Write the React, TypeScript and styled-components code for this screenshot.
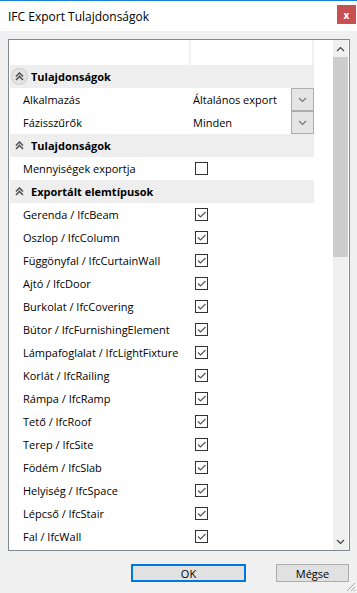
import styled, { createGlobalStyle } from 'styled-components';

const GlobalStyle = createGlobalStyle`
  html, body {
    margin: 0;
    padding: 0;
    background: #f0f0f0;
  }
  body {
    font-family: 'Open Sans', 'Noto Sans', sans-serif;
    font-size: 11px;
    color: #000;
  }
`;

const Window = styled.div`
  width: 357px;
  height: 593px;
  box-sizing: border-box;
  border-top: 1px solid #1883d7;
  background: #f0f0f0;
  display: flex;
  flex-direction: column;
  position: relative;
  overflow: hidden;
`;

const TitleBar = styled.div`
  height: 30px;
  background: #fff;
  display: flex;
  align-items: center;
  justify-content: space-between;
  padding-left: 8px;
  font-size: 12px;
`;

const CloseButton = styled.div`
  width: 19px;
  height: 19px;
  margin-right: 1px;
  margin-top: -3px;
  background: #c75050;
  color: #fff;
  font-weight: bold;
  font-size: 10px;
  display: flex;
  align-items: center;
  justify-content: center;
`;

const Body = styled.div`
  flex: 1;
  display: flex;
  flex-direction: column;
  padding: 8px 7px 0 8px;
`;

const Panel = styled.div`
  height: 512px;
  box-sizing: border-box;
  border: 1px solid #828790;
  background: #fff;
  display: flex;
`;

const Grid = styled.div`
  width: 304px;
  padding-left: 1px;
  display: flex;
  flex-direction: column;
`;

const HeaderRow = styled.div`
  height: 25px;
  display: flex;
  flex-shrink: 0;
`;

const HeaderCell = styled.div<{ $w: number }>`
  width: ${(p) => p.$w}px;
  box-sizing: border-box;
  border-right: 2px solid #f0f0f0;
`;

const Row = styled.div<{ $section?: boolean }>`
  height: 23px;
  flex-shrink: 0;
  display: flex;
  align-items: center;
  background: ${(p) => (p.$section ? '#eeeeee' : '#fff')};
  font-weight: ${(p) => (p.$section ? 'bold' : 'normal')};
`;

const SectionIcon = styled.span<{ $ring?: boolean }>`
  width: 17px;
  height: 17px;
  margin-left: 1px;
  margin-right: 3px;
  border-radius: 50%;
  display: flex;
  align-items: center;
  justify-content: center;
  background: ${(p) => (p.$ring ? '#e4e4e4' : 'transparent')};
  box-shadow: ${(p) => (p.$ring ? 'inset 0 0 0 1px #d0d0d0' : 'none')};
`;

const Label = styled.div`
  width: 180px;
  box-sizing: border-box;
  padding-left: 13px;
  white-space: nowrap;
`;

const Value = styled.div`
  flex: 1;
  display: flex;
  align-items: center;
  height: 100%;
  padding-left: 3px;
  white-space: nowrap;
`;

const ValueText = styled.span`
  flex: 1;
`;

const DropButton = styled.div`
  width: 23px;
  height: 23px;
  box-sizing: border-box;
  border: 1px solid #adadad;
  background: #e5e5e5;
  display: flex;
  align-items: center;
  justify-content: center;
`;

const Check = styled.div`
  width: 13px;
  height: 13px;
  margin-left: 2px;
  box-sizing: border-box;
  border: 1px solid #333;
  background: #fff;
  display: flex;
  align-items: center;
  justify-content: center;
`;

const Gap = styled.div`
  width: 19px;
`;

const ScrollBar = styled.div`
  width: 15px;
  background: #f0f0f0;
  display: flex;
  flex-direction: column;
  align-items: center;
`;

const ScrollArrow = styled.div`
  height: 17px;
  width: 15px;
  display: flex;
  align-items: center;
  justify-content: center;
`;

const ScrollThumb = styled.div`
  width: 15px;
  height: 200px;
  background: #cdcdcd;
`;

const ScrollTrack = styled.div`
  flex: 1;
`;

const Footer = styled.div`
  display: flex;
  justify-content: flex-end;
  gap: 30px;
  padding: 13px 1px 0 0;
`;

const Button = styled.div<{ $primary?: boolean; $w: number }>`
  width: ${(p) => p.$w}px;
  height: 18px;
  box-sizing: border-box;
  border: ${(p) => (p.$primary ? '2px solid #0078d7' : '1px solid #adadad')};
  background: #e1e1e1;
  display: flex;
  align-items: center;
  justify-content: center;
  font-size: 11px;
`;

const Grip = styled.svg`
  position: absolute;
  right: 1px;
  bottom: 1px;
`;

const DoubleUp = () => (
  <svg width="9" height="9" viewBox="0 0 9 9">
    <path d="M1 4.5 L4.5 1 L8 4.5 M1 8 L4.5 4.5 L8 8" fill="none" stroke="#555" strokeWidth="1.6" />
  </svg>
);

const Chevron = ({ up, color = '#777' }: { up?: boolean; color?: string }) => (
  <svg width="9" height="6" viewBox="0 0 9 6">
    <path d={up ? 'M1 5 L4.5 1.5 L8 5' : 'M1 1 L4.5 4.5 L8 1'} fill="none" stroke={color} strokeWidth="1.2" />
  </svg>
);

const CheckBox = ({ checked }: { checked?: boolean }) => (
  <Check>
    {checked && (
      <svg width="11" height="11" viewBox="0 0 11 11">
        <path d="M2 5.5 L4.5 8 L9.5 3" fill="none" stroke="#555" strokeWidth="1.2" />
      </svg>
    )}
  </Check>
);

const elements = [
  'Gerenda / IfcBeam',
  'Oszlop / IfcColumn',
  'Függönyfal / IfcCurtainWall',
  'Ajtó / IfcDoor',
  'Burkolat / IfcCovering',
  'Bútor / IfcFurnishingElement',
  'Lámpafoglalat / IfcLightFixture',
  'Korlát / IfcRailing',
  'Rámpa / IfcRamp',
  'Tető / IfcRoof',
  'Terep / IfcSite',
  'Födém / IfcSlab',
  'Helyiség / IfcSpace',
  'Lépcső / IfcStair',
  'Fal / IfcWall',
];

const Section = ({ title, ring }: { title: string; ring?: boolean }) => (
  <Row $section>
    <SectionIcon $ring={ring}>
      <DoubleUp />
    </SectionIcon>
    {title}
  </Row>
);

export default function App() {
  return (
    <Window>
      <GlobalStyle />
      <TitleBar>
        IFC Export Tulajdonságok
        <CloseButton>x</CloseButton>
      </TitleBar>
      <Body>
        <Panel>
          <Grid>
            <HeaderRow>
              <HeaderCell $w={181} />
              <HeaderCell $w={123} />
            </HeaderRow>
            <Section title="Tulajdonságok" ring />
            <Row>
              <Label>Alkalmazás</Label>
              <Value>
                <ValueText>Általános export</ValueText>
                <DropButton>
                  <Chevron />
                </DropButton>
              </Value>
            </Row>
            <Row>
              <Label>Fázisszűrők</Label>
              <Value>
                <ValueText>Minden</ValueText>
                <DropButton>
                  <Chevron />
                </DropButton>
              </Value>
            </Row>
            <Section title="Tulajdonságok" />
            <Row>
              <Label>Mennyiségek exportja</Label>
              <Value>
                <CheckBox />
              </Value>
            </Row>
            <Section title="Exportált elemtípusok" />
            {elements.map((e) => (
              <Row key={e}>
                <Label>{e}</Label>
                <Value>
                  <CheckBox checked />
                </Value>
              </Row>
            ))}
          </Grid>
          <Gap />
          <ScrollBar>
            <ScrollArrow>
              <Chevron up color="#444" />
            </ScrollArrow>
            <ScrollThumb />
            <ScrollTrack />
            <ScrollArrow>
              <Chevron color="#444" />
            </ScrollArrow>
          </ScrollBar>
        </Panel>
        <Footer>
          <Button $primary $w={115}>OK</Button>
          <Button $w={73}>Mégse</Button>
        </Footer>
      </Body>
      <Grip width="11" height="11" viewBox="0 0 11 11">
        <path d="M10 2 L2 10 M10 6 L6 10 M10 9 L9 10" stroke="#aaa" strokeWidth="1" />
      </Grip>
    </Window>
  );
}
